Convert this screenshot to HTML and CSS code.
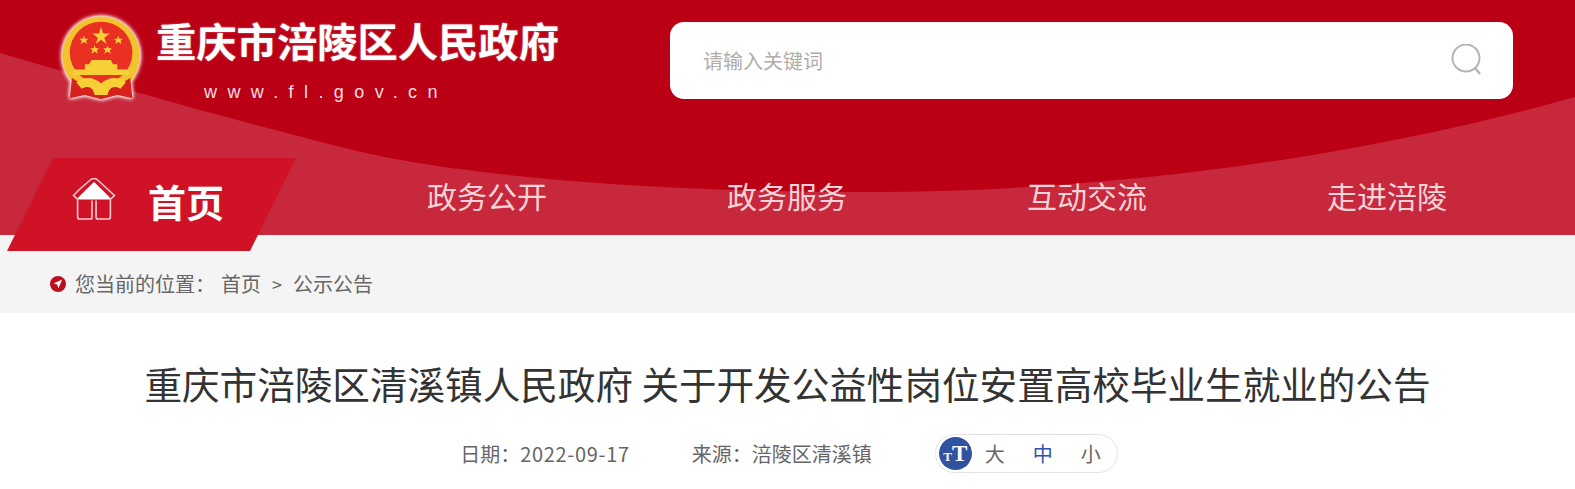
FILE: index.html
```html
<!DOCTYPE html>
<html lang="zh-CN">
<head>
<meta charset="utf-8">
<title>重庆市涪陵区人民政府</title>
<link rel="stylesheet" href="styles.css">
</head>
<body>
<header class="header">
  <svg class="wave" viewBox="0 0 1575 235" preserveAspectRatio="none" aria-hidden="true">
    <path d="M0 53 C120 88 240 122 353 150 C450 174 640 192 868 192 C1100 192 1350 160 1575 97 L1575 235 L0 235 Z" fill="#c8283c"/>
  </svg>
  <div class="top">
    <div class="brand">
      <svg class="emblem" viewBox="0 0 100 95" preserveAspectRatio="none" aria-hidden="true">
        <ellipse cx="51" cy="44" rx="36" ry="37" fill="#f3c22c"/>
        <ellipse cx="51" cy="41" rx="29" ry="29" fill="#ea3023"/>
        <polygon points="51,17 53,23 59,23 54,27 56,33 51,29 46,33 48,27 43,23 49,23" fill="#f7d038"/>
        <polygon points="35,25 36,28 39,28 37,30 38,33 35,31 32,33 33,30 31,28 34,28" fill="#f7d038"/>
        <polygon points="67,25 68,28 71,28 69,30 70,33 67,31 64,33 65,30 63,28 66,28" fill="#f7d038"/>
        <polygon points="45,34 46,37 49,37 47,39 48,42 45,40 42,42 43,39 41,37 44,37" fill="#f7d038"/>
        <polygon points="57,34 58,37 61,37 59,39 60,42 57,40 54,42 55,39 53,37 56,37" fill="#f7d038"/>
        <path d="M40 52 L42 48 L60 48 L62 52 L66 52 L66 57 L76 57 L78 62 L24 62 L26 57 L36 57 L36 52 Z" fill="#f7d038"/>
        <path d="M24 65 L34 71 L51 73 L68 71 L78 65 L80 84 L66 81 L51 85 L36 81 L22 84 Z" fill="#d8201c"/>
        <path d="M28 69 C36 63 44 64 51 70 C58 64 66 63 74 69 L69 75 C62 71 58 75 57 81 L45 81 C44 75 40 71 33 75 Z" fill="#f7d038"/>
      </svg>
      <div class="brand-text">
        <div class="site-name">重庆市涪陵区人民政府</div>
        <div class="site-url">www.fl.gov.cn</div>
      </div>
    </div>
    <form class="search">
      <span class="search-hint">请输入关键词</span>
      <svg class="search-icon" viewBox="0 0 32 32" aria-hidden="true">
        <circle cx="15" cy="14" r="13.5" fill="none" stroke="#b4b4b4" stroke-width="2"/>
        <path d="M24 24 L29 30" fill="none" stroke="#b4b4b4" stroke-width="2.4"/>
      </svg>
    </form>
  </div>
  <nav class="nav">
    <a class="nav-home">
      <svg class="home-icon" viewBox="0 0 42 41" aria-hidden="true">
        <path d="M21 5 L36 20 L6 20 Z" fill="#fff" stroke="#fff" stroke-width="2" stroke-linejoin="round"/>
        <path d="M7 11 L18 1.5 Q21 -0.5 24 1.5 L41 17 L37 21 M5 21 L1 17 L7 11" fill="none" stroke="#f6c9cf" stroke-width="1.5"/>
        <path d="M5 21 V38 Q5 40 7 40 H18 Q19 40 19 38 V22 M23 22 V38 Q23 40 25 40 H35 Q37 40 37 38 V21" fill="none" stroke="#f6c9cf" stroke-width="1.6"/>
      </svg>
      <span class="home-label">首页</span>
    </a>
    <div class="nav-items">
      <a class="nav-item">政务公开</a>
      <a class="nav-item">政务服务</a>
      <a class="nav-item">互动交流</a>
      <a class="nav-item">走进涪陵</a>
    </div>
  </nav>
</header>
<div class="crumbs">
  <svg class="crumb-icon" viewBox="0 0 16 16" aria-hidden="true">
    <circle cx="8" cy="8" r="8" fill="#bb0f20"/>
    <path d="M12.2 3.6 L3.6 7.4 L7.2 8.6 L8.4 12.2 Z" fill="#fff"/>
  </svg>
  <span class="crumb-here">您当前的位置：</span>
  <a class="crumb-link">首页</a>
  <span class="crumb-sep">&gt;</span>
  <a class="crumb-link">公示公告</a>
</div>
<main class="article">
  <h1 class="article-title">重庆市涪陵区清溪镇人民政府 关于开发公益性岗位安置高校毕业生就业的公告</h1>
  <div class="meta">
    <span class="meta-item">日期：<span class="meta-date">2022-09-17</span></span>
    <span class="meta-item">来源：涪陵区清溪镇</span>
    <div class="font-size">
      <span class="fs-badge"><span class="fs-small">T</span><span class="fs-big">T</span></span>
      <a class="fs-option">大</a>
      <a class="fs-option fs-active">中</a>
      <a class="fs-option">小</a>
    </div>
  </div>
</main>
</body>
</html>
```

FILE: styles.css
```css
* { box-sizing: border-box; }
html, body { margin: 0; padding: 0; }
body {
  background: #fff;
  color: #333;
  font-family: "Noto Sans CJK SC", "Noto Sans", sans-serif;
  overflow: hidden;
}
a { color: inherit; text-decoration: none; }

.header {
  position: relative;
  height: 235px;
  background: #bb0015;
}
.wave {
  position: absolute;
  left: 0;
  top: 0;
  width: 100%;
  height: 100%;
}
.top {
  position: relative;
  height: 158px;
  display: flex;
  justify-content: space-between;
  padding: 0 62px 0 50px;
}
.brand { display: flex; align-items: flex-start; }
.emblem {
  width: 108px;
  height: 101px;
  margin: 9px 0 0 -4px;
  display: block;
  flex: none;
  filter: drop-shadow(0 0 2px #fff) drop-shadow(0 0 1px #fff);
}
.brand-text { margin-left: 2px; margin-top: 16px; }
.site-name {
  color: #fff;
  font-size: 40.3px;
  font-weight: 700;
  line-height: 48px;
  white-space: nowrap;
  text-shadow: 0 0 2px rgba(255, 255, 255, .45);
}
.site-url {
  color: #f7dfe2;
  font-family: "Liberation Sans", sans-serif;
  font-size: 18px;
  line-height: 22px;
  letter-spacing: 10.4px;
  margin: 17px 0 0 48px;
  white-space: nowrap;
}
.search {
  width: 843px;
  height: 77px;
  margin-top: 22px;
  background: #fff;
  border-radius: 14px;
  display: flex;
  align-items: center;
  justify-content: space-between;
  padding: 0 30px 0 33px;
}
.search-hint { color: #b2aca8; font-size: 20px; line-height: 28px; }
.search-icon { width: 32px; height: 32px; display: block; margin-top: -1px; }

.nav {
  position: relative;
  display: flex;
  height: 93px;
}
.nav-home {
  width: 289px;
  height: 93px;
  margin-left: 7px;
  flex: none;
  background: #d01227;
  clip-path: polygon(46px 0, 100% 0, 243px 100%, 0 100%);
  display: flex;
  align-items: center;
  padding: 0 0 8px 65px;
}
.home-icon { width: 44px; height: 42px; display: block; margin-top: -3px; }
.home-label {
  color: #fff;
  font-size: 38px;
  font-weight: 700;
  line-height: 48px;
  margin-left: 32px;
}
.nav-items { display: flex; margin-left: 41px; height: 77px; align-items: center; }
.nav-item {
  width: 300px;
  text-align: center;
  color: #f6d3d8;
  font-size: 30px;
  line-height: 40px;
  margin-top: -4px;
}

.crumbs {
  height: 78px;
  background: #f4f4f4;
  display: flex;
  align-items: center;
  padding: 20px 0 0 50px;
  color: #666;
  font-size: 20px;
  line-height: 28px;
}
.crumb-icon { width: 16px; height: 16px; flex: none; margin-right: 9px; }
.crumb-here { margin-right: 6px; }
.crumb-sep { font-size: 18px; margin: 0 11px; }

.article-title {
  margin: 43px 0 0;
  text-align: center;
  color: #333;
  font-size: 37.6px;
  font-weight: 400;
  line-height: 54px;
  white-space: nowrap;
}
.meta {
  display: flex;
  justify-content: center;
  align-items: center;
  gap: 62px;
  margin-top: 24px;
  padding-left: 3px;
  color: #666;
  font-size: 20px;
  line-height: 28px;
}
.meta-date { letter-spacing: .7px; }
.font-size {
  width: 183px;
  height: 39px;
  margin-left: 1px;
  border: 1px solid #e3e3e3;
  border-radius: 20px;
  display: flex;
  align-items: center;
  padding-left: 3px;
}
.fs-badge {
  width: 33px;
  height: 33px;
  border-radius: 50%;
  background: #31529f;
  color: #fff;
  font-family: "Liberation Serif", serif;
  font-weight: 700;
  display: flex;
  align-items: baseline;
  justify-content: center;
  flex: none;
  line-height: 33px;
}
.fs-small { font-size: 13px; }
.fs-big { font-size: 23px; }
.fs-option { width: 20px; text-align: center; margin-left: 28px; }
.fs-option:first-of-type { margin-left: 13px; }
.fs-active { color: #2f54a8; }
```
